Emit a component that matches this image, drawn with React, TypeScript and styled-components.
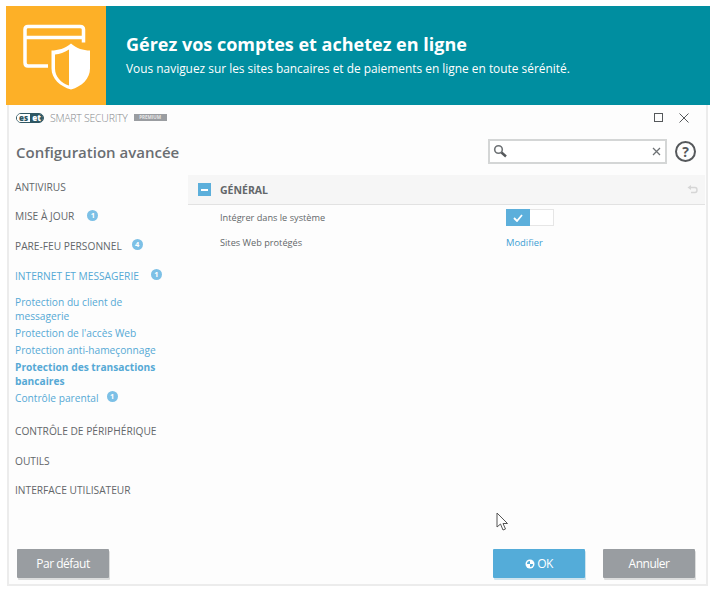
import React from "react";
import styled, { createGlobalStyle } from "styled-components";

const Global = createGlobalStyle`
  html, body { margin: 0; padding: 0; background: #fff; }
  body { font-family: "Open Sans", "Noto Sans", sans-serif; }
`;

const Page = styled.div`
  position: relative;
  width: 717px;
  height: 599px;
  padding: 6px 7px 0 6px;
  box-sizing: border-box;
  overflow: hidden;
`;

const Banner = styled.header`
  display: flex;
  height: 99px;
  background: #008ea0;
  color: #fff;
`;

const BannerIcon = styled.div`
  width: 100px;
  flex: none;
  background: #fdb027;
  display: flex;
  align-items: center;
  justify-content: center;
`;

const BannerText = styled.div`
  padding: 26px 0 0 20px;
`;

const BannerTitle = styled.h1`
  margin: 0;
  font-size: 18px;
  line-height: 25px;
  font-weight: 700;
`;

const BannerSub = styled.p`
  margin: 3px 0 0;
  font-size: 11.9px;
  line-height: 17px;
  font-weight: 400;
`;

const Window = styled.div`
  margin: 0 2px 0 1px;
  height: 481px;
  box-sizing: border-box;
  border: 2px solid #ececec;
  border-top: none;
  background: #fdfdfd;
  display: flex;
  flex-direction: column;
`;

const TitleBar = styled.div`
  height: 25px;
  display: flex;
  align-items: center;
  padding: 0 17px 0 7px;
  flex: none;
`;

const Logo = styled.span`
  width: 28px;
  height: 10px;
  box-sizing: border-box;
  border: 1.5px solid #2f5763;
  border-radius: 5px;
  display: flex;
  overflow: hidden;
  font-size: 8px;
  font-weight: 800;
  line-height: 7px;
`;

const LogoPart = styled.span<{ $dark?: boolean }>`
  flex: 1;
  text-align: center;
  background: ${(p) => (p.$dark ? "#2f5763" : "#fff")};
  color: ${(p) => (p.$dark ? "#fff" : "#2f5763")};
`;

const Brand = styled.span`
  font-size: 10.5px;
  font-weight: 300;
  color: #85888c;
  letter-spacing: -0.25px;
  margin-left: 6px;
`;

const PremiumTag = styled.span`
  display: inline-block;
  background: #9a9da1;
  color: #e8e8e8;
  font-size: 4.5px;
  font-weight: 700;
  line-height: 7px;
  height: 7px;
  width: 33px;
  text-align: center;
  margin-left: 6px;
`;

const WinControls = styled.div`
  margin-left: auto;
  display: flex;
  align-items: center;
  gap: 16px;
`;

const HeadRow = styled.div`
  height: 45px;
  box-sizing: border-box;
  display: flex;
  align-items: center;
  padding: 0 10px 2px 7px;
  flex: none;
`;

const PageTitle = styled.h2`
  margin: 0;
  font-size: 15px;
  font-weight: 600;
  color: #6a6e72;
`;

const Search = styled.div`
  margin-left: auto;
  width: 179px;
  height: 25px;
  box-sizing: border-box;
  border: 2px solid #d4d6d6;
  background: #fff;
  display: flex;
  align-items: center;
  justify-content: space-between;
  padding: 0 4px 0 3px;
`;

const HelpIcon = styled.div`
  margin-left: 8px;
  width: 21px;
  height: 21px;
  box-sizing: border-box;
  border: 2px solid #55585b;
  border-radius: 50%;
  color: #55585b;
  font-size: 14px;
  font-weight: 700;
  line-height: 17px;
  text-align: center;
`;

const Body = styled.div`
  flex: 1;
  display: flex;
  min-height: 0;
`;

const Sidebar = styled.nav`
  width: 179px;
  flex: none;
  margin-top: -3px;
  padding-left: 6px;
  box-sizing: border-box;
  display: flex;
  flex-direction: column;
`;

const NavItem = styled.div<{ $active?: boolean; $mt?: number }>`
  height: 29.6px;
  margin-top: ${(p) => p.$mt ?? 0}px;
  display: flex;
  align-items: center;
  font-size: 10.2px;
  color: ${(p) => (p.$active ? "#56a9d5" : "#63676a")};
`;

const Badge = styled.span<{ $gap: number }>`
  width: 11px;
  height: 11px;
  margin-left: ${(p) => p.$gap}px;
  margin-top: -2px;
  border-radius: 50%;
  background: #7cc0e6;
  color: #fff;
  font-size: 7.5px;
  font-weight: 700;
  line-height: 11px;
  text-align: center;
`;

const SubList = styled.div`
  display: flex;
  flex-direction: column;
  gap: 3px;
  padding-top: 4.4px;
`;

const SubItem = styled.div<{ $current?: boolean }>`
  width: 150px;
  font-size: 10.2px;
  line-height: 14px;
  color: #56a9d5;
  font-weight: ${(p) => (p.$current ? 700 : 400)};
  display: flex;
  align-items: center;
`;

const Main = styled.main`
  flex: 1;
  min-width: 0;
`;

const SectionHead = styled.div`
  height: 30px;
  box-sizing: border-box;
  background: #f6f6f6;
  border-bottom: 1px solid #e2e2e2;
  display: flex;
  align-items: center;
  padding: 0 7px 0 10px;
  margin-right: 1px;
`;

const Collapse = styled.div`
  width: 13px;
  height: 13px;
  background: #5cafdb;
  display: flex;
  align-items: center;
  justify-content: center;
  &::before {
    content: "";
    width: 7px;
    height: 2px;
    background: #fff;
  }
`;

const SectionTitle = styled.span`
  margin-left: 9px;
  font-size: 10.5px;
  font-weight: 700;
  color: #63676a;
`;

const Reset = styled.div`
  margin-left: auto;
  display: flex;
`;

const SettingRow = styled.div<{ $h: number }>`
  height: ${(p) => p.$h}px;
  display: flex;
  align-items: center;
  padding-left: 32px;
  font-size: 9.2px;
  color: #63676a;
`;

const SettingLabel = styled.span`
  width: 286px;
  flex: none;
`;

const Toggle = styled.div`
  width: 48px;
  height: 17px;
  box-sizing: border-box;
  border: 1px solid #e6e6e6;
  background: #fff;
  display: flex;
`;

const ToggleOn = styled.div`
  width: 24px;
  margin: -1px 0 -1px -1px;
  background: #5cafdb;
  display: flex;
  align-items: center;
  justify-content: center;
`;

const LinkText = styled.span`
  color: #3f9fd4;
  font-size: 9.4px;
`;

const Footer = styled.footer`
  height: 35px;
  box-sizing: border-box;
  flex: none;
  display: flex;
  padding: 0 11px 0 8px;
  gap: 18px;
`;

const Button = styled.div<{ $primary?: boolean }>`
  width: 92px;
  height: 29px;
  background: ${(p) => (p.$primary ? "#54acd9" : "#999da1")};
  color: #fff;
  box-shadow: 1px 2px 0 ${(p) => (p.$primary ? "#cfe4ee" : "#dcdddd")};
  border-radius: 1px;
  font-size: 12px;
  letter-spacing: -0.5px;
  display: flex;
  align-items: center;
  justify-content: center;
  gap: 2px;
`;

const Spacer = styled.div`
  flex: 1;
`;

const Cursor = styled.svg`
  position: absolute;
  left: 496px;
  top: 512px;
`;

export default function App() {
  return (
    <Page>
      <Global />
      <Banner>
        <BannerIcon>
          <svg width="72" height="72" viewBox="20 19.5 72 72" fill="none">
            <path d="M48 65.500H28Q25 65.500 25 62V29Q25 26 28 26H80Q83.500 26 83.500 29V42" stroke="#fff" strokeWidth="3.500" />
            <path d="M25 37H83.500" stroke="#fff" strokeWidth="3.500" />
            <path d="M71 43C65 48 58 50 51.500 50V68C51.500 78 60 86 71 89C82 86 90 78 90 68V50C83 50 77 48 71 43Z" fill="#fff" />
            <path d="M69 49C64 52 60 53.500 55 54V68C55 76 61 82.500 69 85Z" fill="#fdb027" />
          </svg>
        </BannerIcon>
        <BannerText>
          <BannerTitle>Gérez vos comptes et achetez en ligne</BannerTitle>
          <BannerSub>Vous naviguez sur les sites bancaires et de paiements en ligne en toute sérénité.</BannerSub>
        </BannerText>
      </Banner>
      <Window>
        <TitleBar>
          <Logo>
            <LogoPart>es</LogoPart>
            <LogoPart $dark>et</LogoPart>
          </Logo>
          <Brand>SMART SECURITY</Brand>
          <PremiumTag>PREMIUM</PremiumTag>
          <WinControls>
            <svg width="9" height="9" viewBox="0 0 9 9"><rect x="0.500" y="0.500" width="8" height="8" fill="none" stroke="#55585b" /></svg>
            <svg width="10" height="10" viewBox="0 0 10 10"><path d="M0.500 0.500L9.500 9.500M9.500 0.500L0.500 9.500" stroke="#55585b" /></svg>
          </WinControls>
        </TitleBar>
        <HeadRow>
          <PageTitle>Configuration avancée</PageTitle>
          <Search>
            <svg width="15" height="15" viewBox="0 0 15 15" fill="none">
              <circle cx="5.500" cy="5.500" r="3.800" stroke="#6e7275" strokeWidth="1.600" />
              <path d="M8.500 8.500L13 12.500" stroke="#55585b" strokeWidth="2.400" />
            </svg>
            <svg width="9" height="9" viewBox="0 0 9 9"><path d="M1 1L8 8M8 1L1 8" stroke="#6e7275" strokeWidth="1.300" /></svg>
          </Search>
          <HelpIcon>?</HelpIcon>
        </HeadRow>
        <Body>
          <Sidebar>
            <NavItem>ANTIVIRUS</NavItem>
            <NavItem>MISE À JOUR<Badge $gap={13}>1</Badge></NavItem>
            <NavItem>PARE-FEU PERSONNEL<Badge $gap={10}>4</Badge></NavItem>
            <NavItem $active>INTERNET ET MESSAGERIE<Badge $gap={12}>1</Badge></NavItem>
            <SubList>
              <SubItem>Protection du client de messagerie</SubItem>
              <SubItem>Protection de l'accès Web</SubItem>
              <SubItem>Protection anti-hameçonnage</SubItem>
              <SubItem $current>Protection des transactions bancaires</SubItem>
              <SubItem>Contrôle parental<Badge $gap={8}>1</Badge></SubItem>
            </SubList>
            <NavItem $mt={11.6}>CONTRÔLE DE PÉRIPHÉRIQUE</NavItem>
            <NavItem>OUTILS</NavItem>
            <NavItem>INTERFACE UTILISATEUR</NavItem>
          </Sidebar>
          <Main>
            <SectionHead>
              <Collapse />
              <SectionTitle>GÉNÉRAL</SectionTitle>
              <Reset>
                <svg width="11" height="9" viewBox="0 0 11 9" fill="none">
                  <path d="M3.500 2.500H8C9.500 2.500 10 3.500 10 5S9.500 7.500 8 7.500H4" stroke="#d6d6d6" strokeWidth="1.400" />
                  <path d="M4 0L0.500 2.500L4 5Z" fill="#d6d6d6" />
                </svg>
              </Reset>
            </SectionHead>
            <SettingRow $h={25}>
              <SettingLabel>Intégrer dans le système</SettingLabel>
              <Toggle>
                <ToggleOn>
                  <svg width="10" height="8" viewBox="0 0 10 8" fill="none"><path d="M1 4L4 7L9 1" stroke="#fff" strokeWidth="1.800" /></svg>
                </ToggleOn>
              </Toggle>
            </SettingRow>
            <SettingRow $h={25}>
              <SettingLabel>Sites Web protégés</SettingLabel>
              <LinkText>Modifier</LinkText>
            </SettingRow>
          </Main>
        </Body>
        <Footer>
          <Button>Par défaut</Button>
          <Spacer />
          <Button $primary>
            <svg width="10" height="10" viewBox="0 0 10 10"><circle cx="5" cy="5" r="4.500" fill="#fff" /><path d="M5 2V5H2A3 3 0 0 1 5 2Z" fill="#54acd9" /><path d="M5 5H8A3 3 0 0 1 5 8Z" fill="#54acd9" /></svg>
            OK
          </Button>
          <Button>Annuler</Button>
        </Footer>
      </Window>
      <Cursor width="13" height="20" viewBox="0 0 13 20">
        <path d="M1 1V15L4.500 12L7 18L9.500 17L7 11.500H11.500Z" fill="#fff" stroke="#555" strokeWidth="1" />
      </Cursor>
    </Page>
  );
}
